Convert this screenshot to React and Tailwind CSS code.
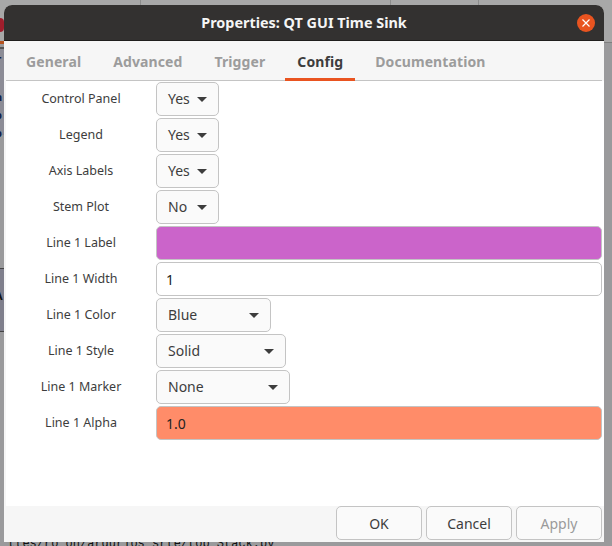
const FONT = "font-['Noto_Sans',sans-serif]"

function Arrow() {
  return (
    <svg width="10" height="5" viewBox="0 0 10 5" className="shrink-0">
      <path d="M0 0h10L5 5z" fill="#3d3d3d" />
    </svg>
  )
}

function Row({ label, children }) {
  return (
    <div className="flex items-center h-9">
      <div className="w-[150px] shrink-0 text-center text-[12.5px] text-[#3d3d3d]">{label}</div>
      {children}
    </div>
  )
}

function Select({ value, width }) {
  return (
    <div className={`${width} h-[34px] flex items-center justify-between px-[11px] bg-[#fafafa] border border-[#c4c4c4] rounded-[5px] text-[14px] text-[#3d3d3d]`}>
      <span className="-mt-[2px]">{value}</span> <Arrow />
    </div>
  )
}

function Entry({ value, bg }) {
  return (
    <div className={`flex-1 h-[34px] flex items-center px-[9px] border border-[#c4c4c4] rounded-[5px] text-[14px] text-[#222] ${bg}`}>
      {value}
    </div>
  )
}

function FootButton({ label, muted }) {
  return (
    <div className={`w-[86px] h-[34px] flex items-center justify-center bg-[#fafafa] border border-[#c4c4c4] rounded-[5px] text-[14px] ${muted ? 'text-[#9a9a9a]' : 'text-[#3d3d3d]'}`}>
      {label}
    </div>
  )
}

// the dimmed main window that peeks out round the dialog
function Backdrop() {
  return (
    <div className="absolute inset-0 bg-[#9a9a9c] overflow-hidden">
      <div className="absolute inset-x-0 top-0 h-[43px] bg-[#a8a8a8] border-b border-[#7f7f7f]" />
      <div className="absolute left-[140px] top-0 w-px h-[5px] bg-[#8c8c8c]" />
      <div className="absolute left-[390px] top-0 w-px h-[5px] bg-[#8c8c8c]" />
      <div className="absolute left-[478px] top-0 w-px h-[5px] bg-[#8c8c8c]" />
      <div className="absolute left-0 top-[18px] w-[4px] h-[14px] rounded-r-full bg-[#a01e2c]" />
      <div className="absolute left-0 top-[41px] w-[4px] h-[3px] bg-[#b5521f]" />
      <div className="absolute left-0 top-[47px] w-[4px] h-[88px] bg-[#8c8c96] border-t-2 border-[#555]" />
      <div className="absolute left-0 top-[268px] w-[4px] h-[64px] bg-[#7f7f8c] border-y border-[#444]" />
      <div className="absolute left-[-5px] top-[288px] text-[11px] font-bold text-[#111]">A</div>
      <div className="absolute left-[-5px] top-[52px] text-[11px] font-bold leading-[18px] text-[#10204a]">
        T<br />:<br />n<br />b<br />b
      </div>
      <div className="absolute left-[8px] top-[535px] font-['Liberation_Mono',monospace] text-[12px] text-[#111] whitespace-nowrap">
        ttes/ro_on/arqurios_srte/top_Stack.py
      </div>
    </div>
  )
}

export default function App() {
  const tabs = ['General', 'Advanced', 'Trigger', 'Config', 'Documentation']

  return (
    <div className={`${FONT} relative w-[612px] h-[546px] pt-[5px] pl-[4px] overflow-hidden`}>
      <Backdrop />
      <div className="relative w-[600px] h-[537px] flex flex-col bg-white rounded-t-[8px] overflow-hidden">
        <div className="h-[36px] shrink-0 flex items-center relative bg-[#333130] border-b border-[#1f1e1d]">
          <div className="flex-1 text-center text-[14.4px] font-bold text-[#f5f5f5]">Properties: QT GUI Time Sink</div>
          <div className="absolute right-[9px] top-[9px] w-[18px] h-[18px] rounded-full bg-[#e95420] flex items-center justify-center">
            <svg width="8" height="8" viewBox="0 0 8 8">
              <path d="M0.5 0.5l7 7M7.5 0.5l-7 7" stroke="#fff" strokeWidth="1.2" />
            </svg>
          </div>
        </div>

        <div className="h-[40px] shrink-0 bg-[#f6f6f6] px-[2px]">
          <div className="h-[40px] flex pl-[8px] gap-[8px] border-b border-[#c4c4c4]">
            {tabs.map(t => (
              <div
                key={t}
                className={`px-3 pt-[10px] h-[40px] text-[14px] font-bold tracking-[0.1px] ${t === 'Config' ? 'text-[#3d3d3d] border-b-[3px] border-[#e95420]' : 'text-[#9c9c9c]'}`}
              >
                {t}
              </div>
            ))}
          </div>
        </div>

        <div className="flex-1 flex">
          <div className="w-[2px] bg-[#f6f6f6]" />
          <div className="flex-1 pr-[2px]">
            <Row label="Control Panel"><Select value="Yes" width="w-[63px]" /></Row>
            <Row label="Legend"><Select value="Yes" width="w-[63px]" /></Row>
            <Row label="Axis Labels"><Select value="Yes" width="w-[63px]" /></Row>
            <Row label="Stem Plot"><Select value="No" width="w-[63px]" /></Row>
            <Row label="Line 1 Label"><Entry bg="bg-[#cb64ca]" /></Row>
            <Row label="Line 1 Width"><Entry value="1" bg="bg-white" /></Row>
            <Row label="Line 1 Color"><Select value="Blue" width="w-[115px]" /></Row>
            <Row label="Line 1 Style"><Select value="Solid" width="w-[130px]" /></Row>
            <Row label="Line 1 Marker"><Select value="None" width="w-[134px]" /></Row>
            <Row label="Line 1 Alpha"><Entry value="1.0" bg="bg-[#ff8c69]" /></Row>
          </div>
        </div>

        <div className="h-[36px] shrink-0 flex justify-end gap-[4px] pr-[2px] bg-[#f6f6f6]">
          <FootButton label="OK" />
          <FootButton label="Cancel" />
          <FootButton label="Apply" muted />
        </div>
      </div>
    </div>
  )
}
